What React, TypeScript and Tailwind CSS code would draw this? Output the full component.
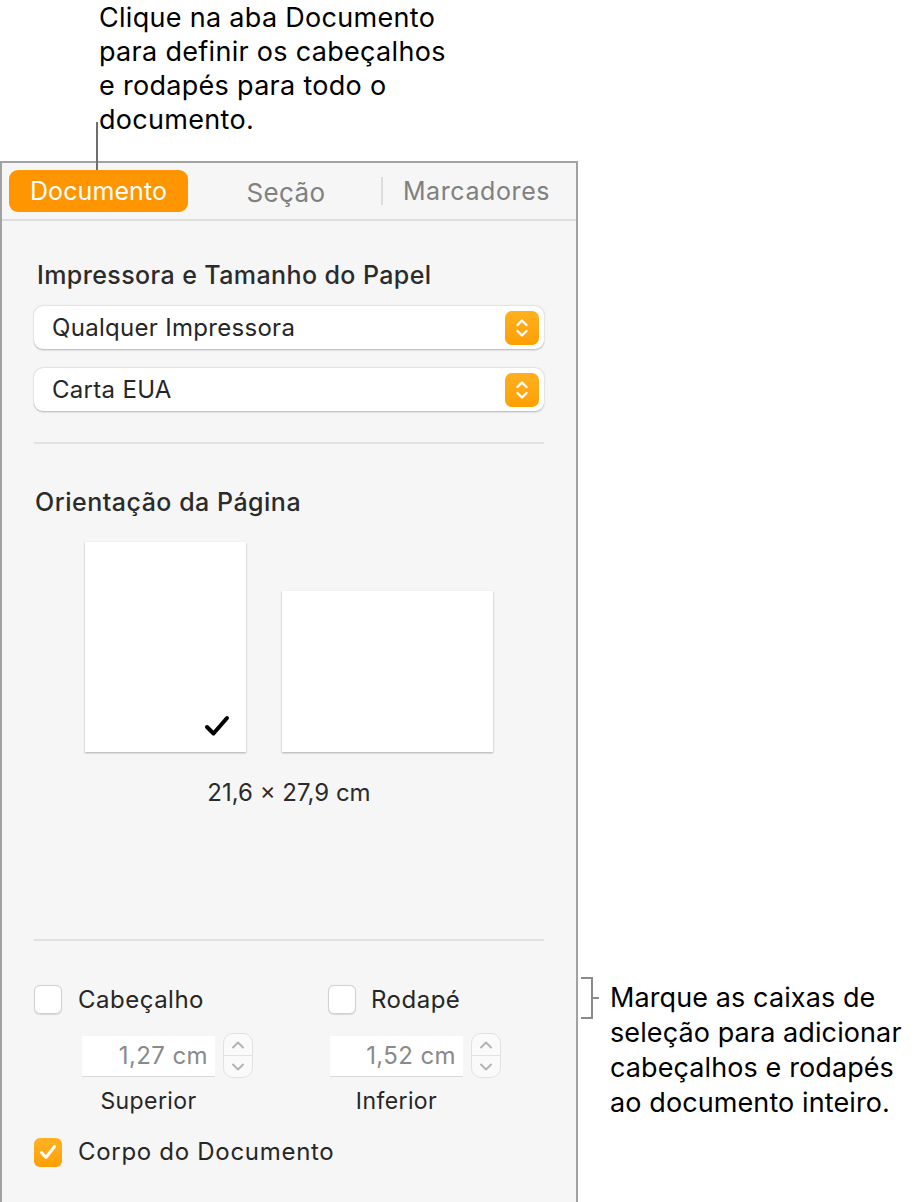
import React from "react";

const ORANGE = "#ff9500";

function UpDown({ color = "#fff", w = 2.4 }: { color?: string; w?: number }) {
  return (
    <svg width="14" height="22" viewBox="0 0 14 22" fill="none">
      <path d="M2.5 8 L7 3.5 L11.5 8" stroke={color} strokeWidth={w} strokeLinecap="round" strokeLinejoin="round" />
      <path d="M2.5 14 L7 18.5 L11.5 14" stroke={color} strokeWidth={w} strokeLinecap="round" strokeLinejoin="round" />
    </svg>
  );
}

function Select({ label }: { label: string }) {
  return (
    <div className="flex items-center justify-between h-[43px] bg-white rounded-[9px] shadow-[0_0.5px_2px_rgba(0,0,0,0.28)] pl-[18px] pr-[5px]">
      <span className="text-[24px] tracking-[0.3px] text-[#262626]">{label}</span>
      <div className="w-[34px] h-[34px] rounded-[7px] bg-gradient-to-b from-[#ffb01f] to-[#ff9f00] flex items-center justify-center">
        <UpDown />
      </div>
    </div>
  );
}

function Check({ on }: { on?: boolean }) {
  if (on) {
    return (
      <div className="w-[28px] h-[29px] rounded-[6px] bg-gradient-to-b from-[#ffb224] to-[#ffa000] flex items-center justify-center">
        <svg width="20" height="18" viewBox="0 0 20 18" fill="none">
          <path d="M3.5 9.5 L8 14.5 L16.5 3.5" stroke="#fff" strokeWidth="3" strokeLinecap="round" strokeLinejoin="round" />
        </svg>
      </div>
    );
  }
  return <div className="w-[28px] h-[29px] rounded-[6px] bg-white border border-[#d2d2d2] shadow-[0_0.5px_1px_rgba(0,0,0,0.12)]" />;
}

function NumberField({ value }: { value: string }) {
  return (
    <div className="flex items-center gap-[8px]">
      <div className="w-[133px] h-[40px] bg-white shadow-[0_1px_0_#dadada] flex items-center justify-end pr-[7px] text-[24px] tracking-[0.4px] text-[#8a8a8a]">
        {value}
      </div>
      <div className="w-[30px] h-[45px] rounded-[10px] bg-[#fafafa] border border-[#e2e2e2] flex flex-col">
        <div className="flex-1 flex items-center justify-center border-b border-[#e2e2e2]">
          <svg width="16" height="10" viewBox="0 0 16 10" fill="none">
            <path d="M3 7.5 L8 2.5 L13 7.5" stroke="#b4b4b4" strokeWidth="2" strokeLinecap="round" strokeLinejoin="round" />
          </svg>
        </div>
        <div className="flex-1 flex items-center justify-center">
          <svg width="16" height="10" viewBox="0 0 16 10" fill="none">
            <path d="M3 2.5 L8 7.5 L13 2.5" stroke="#b4b4b4" strokeWidth="2" strokeLinecap="round" strokeLinejoin="round" />
          </svg>
        </div>
      </div>
    </div>
  );
}

function Panel() {
  return (
    <div className="w-[578px] h-[1041px] shrink-0 bg-[#f6f6f6] border-l-2 border-t-2 border-r-2 border-[#a2a2a2] overflow-hidden">
      {/* tabs */}
      <div className="h-[58px] flex items-center border-b-2 border-[#dedede]">
        <div className="ml-[7px] w-[179px] h-[42px] pt-[2px] rounded-[9px] flex items-center justify-center text-white text-[25px] tracking-[0.1px]" style={{ background: ORANGE }}>
          Documento
        </div>
        <div className="w-[193px] flex justify-center pt-[2px] pl-[3px] text-[26px] tracking-[0.4px] text-[#808080]">Seção</div>
        <div className="w-[2px] h-[28px] bg-[#dcdcdc]" />
        <div className="flex-1 flex justify-center pt-[2px] pr-[6px] text-[25px] tracking-[0.6px] text-[#808080]">Marcadores</div>
      </div>

      <div className="px-[32px]">
        <div className="mt-[39px] text-[25px] leading-[30px] tracking-[0.4px] font-medium text-[#2b2b2b] pl-[3px]">Impressora e Tamanho do Papel</div>
        <div className="mt-[16px] flex flex-col gap-[19px]">
          <Select label="Qualquer Impressora" />
          <Select label="Carta EUA" />
        </div>
        <div className="mt-[31px] h-[2px] bg-[#e2e2e2]" />

        <div className="mt-[43px] text-[25px] leading-[30px] tracking-[0.5px] font-medium text-[#2b2b2b] pl-[1px]">Orientação da Página</div>
        <div className="mt-[25px] flex items-end justify-center gap-[36px]">
          <div className="relative w-[161px] h-[210px] bg-white shadow-[0_0.5px_2px_rgba(0,0,0,0.3)]">
            <svg className="absolute right-[16px] bottom-[15px]" width="26" height="22" viewBox="0 0 26 22" fill="none">
              <path d="M3 12 L9.5 18.5 L23 3" stroke="#000" strokeWidth="4" strokeLinecap="round" strokeLinejoin="round" />
            </svg>
          </div>
          <div className="w-[211px] h-[161px] bg-white shadow-[0_0.5px_2px_rgba(0,0,0,0.3)]" />
        </div>
        <div className="mt-[26px] text-center text-[24px] leading-[30px] text-[#2b2b2b]">21,6 × 27,9 cm</div>

        <div className="mt-[131px] h-[2px] bg-[#e2e2e2]" />

        <div className="mt-[44px] flex items-center h-[29px]">
          <div className="w-[294px] flex items-center gap-[16px]">
            <Check />
            <span className="text-[24px] tracking-[0.5px] text-[#262626]">Cabeçalho</span>
          </div>
          <div className="flex items-center gap-[15px]">
            <Check />
            <span className="text-[24px] tracking-[0.5px] text-[#262626]">Rodapé</span>
          </div>
        </div>

        <div className="mt-[19px] flex">
          <div className="w-[248px] ml-[48px]">
            <NumberField value="1,27 cm" />
            <div className="w-[133px] text-center text-[23px] tracking-[0.4px] leading-[28px] mt-[9px] text-[#262626]">Superior</div>
          </div>
          <div className="">
            <NumberField value="1,52 cm" />
            <div className="w-[133px] text-center text-[23px] tracking-[0.4px] leading-[28px] mt-[9px] text-[#262626]">Inferior</div>
          </div>
        </div>

        <div className="mt-[19px] flex items-center gap-[16px]">
          <Check on />
          <span className="text-[24px] tracking-[0.7px] text-[#262626]">Corpo do Documento</span>
        </div>
        <div className="mt-[34px] h-[2px] bg-[#e2e2e2]" />
      </div>
    </div>
  );
}

export default function App() {
  return (
    <div className="relative w-[916px] h-[1202px] bg-white overflow-hidden font-['Inter',sans-serif] text-black">
      <div className="h-[161px] pl-[99px] pt-[1px] text-[27px] tracking-[0.3px] leading-[34px]">
        Clique na aba Documento<br />
        para definir os cabeçalhos<br />
        e rodapés para todo o<br />
        documento.
      </div>

      <div className="flex">
        <Panel />
        <div className="pt-[816px] flex">
          <div className="relative w-[32px] h-[44px]">
            <div className="absolute left-[3px] top-0 w-[12px] h-[42px] border-t-2 border-r-2 border-b-2 border-[#8a8a8a]" />
            <div className="absolute left-[15px] top-[20px] w-[6px] h-[2px] bg-[#8a8a8a]" />
          </div>
          <div className="text-[27px] tracking-[0.1px] leading-[35px] mt-[3px]">
            Marque as caixas de<br />
            seleção para adicionar<br />
            cabeçalhos e rodapés<br />
            ao documento inteiro.
          </div>
        </div>
      </div>

      {/* leader line to the tab */}
      <div className="absolute left-[96px] top-[122px] w-[2px] h-[48px] bg-[#6e6e6e]" />
    </div>
  );
}
